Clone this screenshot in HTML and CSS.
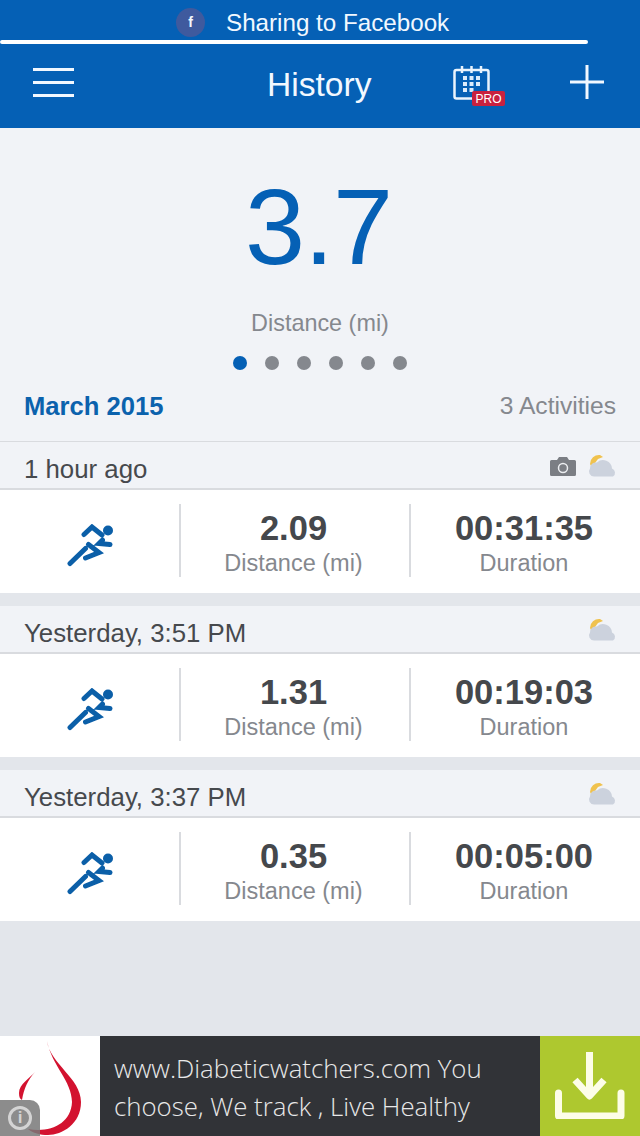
FILE: index.html
```html
<!DOCTYPE html>
<html lang="en">
<head>
  <meta charset="UTF-8">
  <title>History</title>
  <link rel="stylesheet" href="styles.css">
</head>
<body>

<svg class="sprites" width="0" height="0">
  <symbol id="runner" viewBox="0 0 46 44">
    <circle cx="41" cy="6.500" r="5" fill="currentColor"/>
    <path d="M3 39.500L18.500 24.500M17 10.500L25 3L35 11M21.500 20.500L32 28.500L18.500 34M35.500 16L32 19.500L43 20.500" fill="none" stroke="currentColor" stroke-width="5" stroke-linecap="round" stroke-linejoin="miter"/>
  </symbol>
  <symbol id="cloud" viewBox="0 0 30 24">
    <path d="M2 10a9 9 0 0 1 10-9l3 2-5 2-3 4-4 3z" fill="#f0c24e"/>
    <path d="M6 22.500a5 5 0 0 1-4-8 6 6 0 0 1 7-6 9 9 0 0 1 15 6 4.500 4.500 0 0 1 1 8z" fill="#ccd2dd"/>
  </symbol>
</svg>

<header class="topbar">
  <div class="sharing">
    <span class="fb-badge">f</span>
    <span>Sharing to Facebook</span>
  </div>
  <div class="progress"></div>
  <nav class="navbar">
    <div class="burger"><i></i><i></i><i></i></div>
    <h1 class="nav-title">History</h1>
    <div class="calendar">
      <svg width="38" height="34" viewBox="0 0 38 34" fill="none" stroke="#eaf4fd" stroke-width="2.500">
        <rect x="1.500" y="4" width="34" height="28.500" rx="2"/>
        <path d="M9 0v7M18.500 0v7M28 0v7"/>
        <path d="M10 12h4M16.500 12h4M23 12h4M10 18h4M16.500 18h4M23 18h4M10 24h4M16.500 24h4" stroke="#dcecfb" stroke-width="4"/>
      </svg>
      <span class="pro">PRO</span>
    </div>
    <svg class="plus" width="36" height="36" viewBox="0 0 36 36" stroke="#f2f8ff" stroke-width="3"><path d="M18 1v34M1 18h34"/></svg>
  </nav>
</header>

<section class="summary">
  <div class="big-number">3.7</div>
  <div class="big-label">Distance (mi)</div>
  <div class="dots">
    <span class="dot active"></span><span class="dot"></span><span class="dot"></span>
    <span class="dot"></span><span class="dot"></span><span class="dot"></span>
  </div>
  <div class="month-row">
    <span class="month">March 2015</span>
    <span class="count">3 Activities</span>
  </div>
</section>

<main class="activities">
  <article class="activity">
    <div class="activity-head">
      <span>1 hour ago</span>
      <span class="head-icons">
        <svg width="26" height="19" viewBox="0 0 26 19"><path d="M1.500 3h5.500l2-3h8l2 3h5.500a1.500 1.500 0 0 1 1.500 1.500v13a1.500 1.500 0 0 1-1.500 1.500h-23a1.500 1.500 0 0 1-1.500-1.500v-13a1.500 1.500 0 0 1 1.500-1.500z" fill="#7b7e84"/><circle cx="13" cy="11" r="4.500" fill="none" stroke="#eceef1" stroke-width="1.500"/></svg>
        <svg width="30" height="24"><use href="#cloud"/></svg>
      </span>
    </div>
    <div class="activity-row">
      <div class="cell-icon"><svg class="runner" width="46" height="44"><use href="#runner"/></svg></div>
      <div class="cell-stat"><b>2.09</b><span>Distance (mi)</span></div>
      <div class="cell-stat"><b>00:31:35</b><span>Duration</span></div>
    </div>
  </article>
  <article class="activity">
    <div class="activity-head">
      <span>Yesterday, 3:51 PM</span>
      <span class="head-icons"><svg width="30" height="24"><use href="#cloud"/></svg></span>
    </div>
    <div class="activity-row">
      <div class="cell-icon"><svg class="runner" width="46" height="44"><use href="#runner"/></svg></div>
      <div class="cell-stat"><b>1.31</b><span>Distance (mi)</span></div>
      <div class="cell-stat"><b>00:19:03</b><span>Duration</span></div>
    </div>
  </article>
  <article class="activity">
    <div class="activity-head">
      <span>Yesterday, 3:37 PM</span>
      <span class="head-icons"><svg width="30" height="24"><use href="#cloud"/></svg></span>
    </div>
    <div class="activity-row">
      <div class="cell-icon"><svg class="runner" width="46" height="44"><use href="#runner"/></svg></div>
      <div class="cell-stat"><b>0.35</b><span>Distance (mi)</span></div>
      <div class="cell-stat"><b>00:05:00</b><span>Duration</span></div>
    </div>
  </article>
</main>

<footer class="ad">
  <div class="ad-logo">
    <svg width="100" height="100" viewBox="0 0 100 100">
      <path d="M47 5C50 28 81 42 81 66C81 88 62 99 48 99C40 99 33 97 28 93C50 97 71 88 72 66C72 45 52 30 47 5Z" fill="#d3122f"/>
      <path d="M35 36C30 42 19 48 19 57C19 61 20 63 22 64C24 52 28 44 35 36Z" fill="#d3122f"/>
    </svg>
    <div class="info"><span class="info-i">i</span></div>
  </div>
  <div class="ad-text">www.Diabeticwatchers.com You choose, We track , Live Healthy</div>
  <div class="ad-action">
    <svg width="70" height="70" viewBox="0 0 70 70" fill="none" stroke="#fdfde8" stroke-width="7" stroke-linejoin="round">
      <path d="M34.500 3V46M20 31L34.500 47L49 31"/>
      <path d="M3.500 44V67H66V44" stroke-linecap="round"/>
    </svg>
  </div>
</footer>

</body>
</html>
```

FILE: styles.css
```css
:root {
  --blue: #0560b5;
  --page: #e3e6eb;
  --panel: #f1f3f7;
  --line: #d9dbdf;
  --grey: #85888e;
  --dark: #45484c;
}

* {
  box-sizing: border-box;
}

body {
  margin: 0;
  width: 640px;
  height: 1136px;
  overflow: hidden;
  display: flex;
  flex-direction: column;
  background: var(--page);
  font-family: "Liberation Sans", Arial, sans-serif;
}

.sprites {
  position: absolute;
}

/* top bar */
.topbar {
  height: 128px;
  flex: none;
  background: var(--blue);
  color: #f2f8ff;
}

.sharing {
  height: 40px;
  padding: 5px 0 0 176px;
  display: flex;
  align-items: center;
  gap: 21px;
  font-size: 24.2px;
}

.fb-badge {
  width: 29px;
  height: 29px;
  border-radius: 50%;
  background: #3f5a9e;
  font-size: 14px;
  font-weight: bold;
  text-align: center;
  line-height: 29px;
}

.progress {
  width: 588px;
  height: 4px;
  background: #fff;
  border-radius: 2px;
}

.navbar {
  height: 84px;
  padding: 0 35px 0 33px;
  display: flex;
  align-items: center;
}

.burger {
  width: 41px;
  margin-top: -8px;
  display: flex;
  flex-direction: column;
  gap: 10px;
}

.burger i {
  height: 3px;
  background: #f2f8ff;
}

.nav-title {
  margin: -2px 0 0 193px;
  width: 186px;
  font-size: 33.6px;
  font-weight: normal;
}

.calendar {
  position: relative;
  width: 38px;
  height: 34px;
  margin-top: -6px;
}

.calendar svg {
  display: block;
}

.pro {
  position: absolute;
  left: 19px;
  top: 25px;
  width: 33px;
  height: 15px;
  background: #c9213f;
  border-radius: 2px;
  color: #fff;
  font-size: 12px;
  line-height: 16px;
  text-align: center;
}

.plus {
  margin-left: auto;
  margin-top: -8px;
}

/* summary */
.summary {
  height: 313px;
  flex: none;
  background: var(--panel);
  text-align: center;
}

.big-number {
  height: 168px;
  padding: 35px 3px 0 0;
  font-size: 108px;
  letter-spacing: -1px;
  line-height: 128px;
  color: var(--blue);
}

.big-label {
  margin-top: 12px;
  font-size: 23.4px;
  line-height: 30px;
  color: var(--grey);
}

.dots {
  margin-top: 18px;
  display: flex;
  justify-content: center;
  gap: 18px;
}

.dot {
  width: 14px;
  height: 14px;
  border-radius: 50%;
  background: #85888e;
}

.dot.active {
  background: var(--blue);
}

.month-row {
  margin-top: 20px;
  padding: 0 24px;
  display: flex;
  justify-content: space-between;
  align-items: center;
  line-height: 32px;
}

.month {
  font-size: 25.6px;
  font-weight: bold;
  color: #0b62ad;
}

.count {
  font-size: 24.6px;
  color: var(--grey);
}

/* activity list */
.activities {
  flex: 1;
  display: flex;
  flex-direction: column;
  gap: 12px;
}

.activity-head {
  height: 49px;
  padding: 8px 22px 0 24px;
  background: var(--panel);
  border-top: 1px solid var(--line);
  border-bottom: 2px solid var(--line);
  display: flex;
  justify-content: space-between;
  align-items: center;
  font-size: 25.8px;
  color: #46494d;
}

.activity + .activity .activity-head {
  border-top-color: var(--page);
}

.head-icons {
  display: flex;
  align-items: center;
  gap: 12px;
  margin-bottom: 6px;
}

.activity-row {
  height: 103px;
  background: #fff;
  display: grid;
  grid-template-columns: 179px 230px 231px;
  align-items: start;
}

.cell-icon {
  display: flex;
  justify-content: center;
  padding-top: 34px;
}

.runner {
  color: #0b5fa8;
}

.cell-stat {
  height: 73px;
  margin-top: 14px;
  padding: 1px 3px 0 0;
  border-left: 2px solid var(--line);
  display: flex;
  flex-direction: column;
  align-items: center;
  color: var(--dark);
}

.cell-stat b {
  font-size: 34.5px;
  line-height: 46px;
}

.cell-stat span {
  font-size: 23.5px;
  line-height: 24px;
  color: var(--grey);
}

/* ad banner */
.ad {
  height: 100px;
  flex: none;
  display: flex;
  background: #313337;
}

.ad-logo {
  position: relative;
  width: 100px;
  background: #fff;
}

.ad-logo svg {
  display: block;
}

.info {
  position: absolute;
  left: 0;
  bottom: 0;
  width: 40px;
  height: 36px;
  background: rgba(120, 120, 120, 0.85);
  border-top-right-radius: 10px;
  display: flex;
  align-items: center;
  justify-content: center;
}

.info-i {
  width: 24px;
  height: 24px;
  border: 3px solid #d4d4d4;
  border-radius: 50%;
  color: #d4d4d4;
  font-size: 17px;
  font-weight: bold;
  line-height: 18px;
  text-align: center;
}

.ad-text {
  width: 440px;
  padding: 13px 20px 0 14px;
  font-family: "Open Sans", sans-serif;
  font-weight: 300;
  font-size: 25.8px;
  line-height: 38px;
  color: #e8e8e8;
}

.ad-action {
  width: 100px;
  background: #aec82f;
  display: flex;
  align-items: center;
  justify-content: center;
  padding-bottom: 4px;
}
```
